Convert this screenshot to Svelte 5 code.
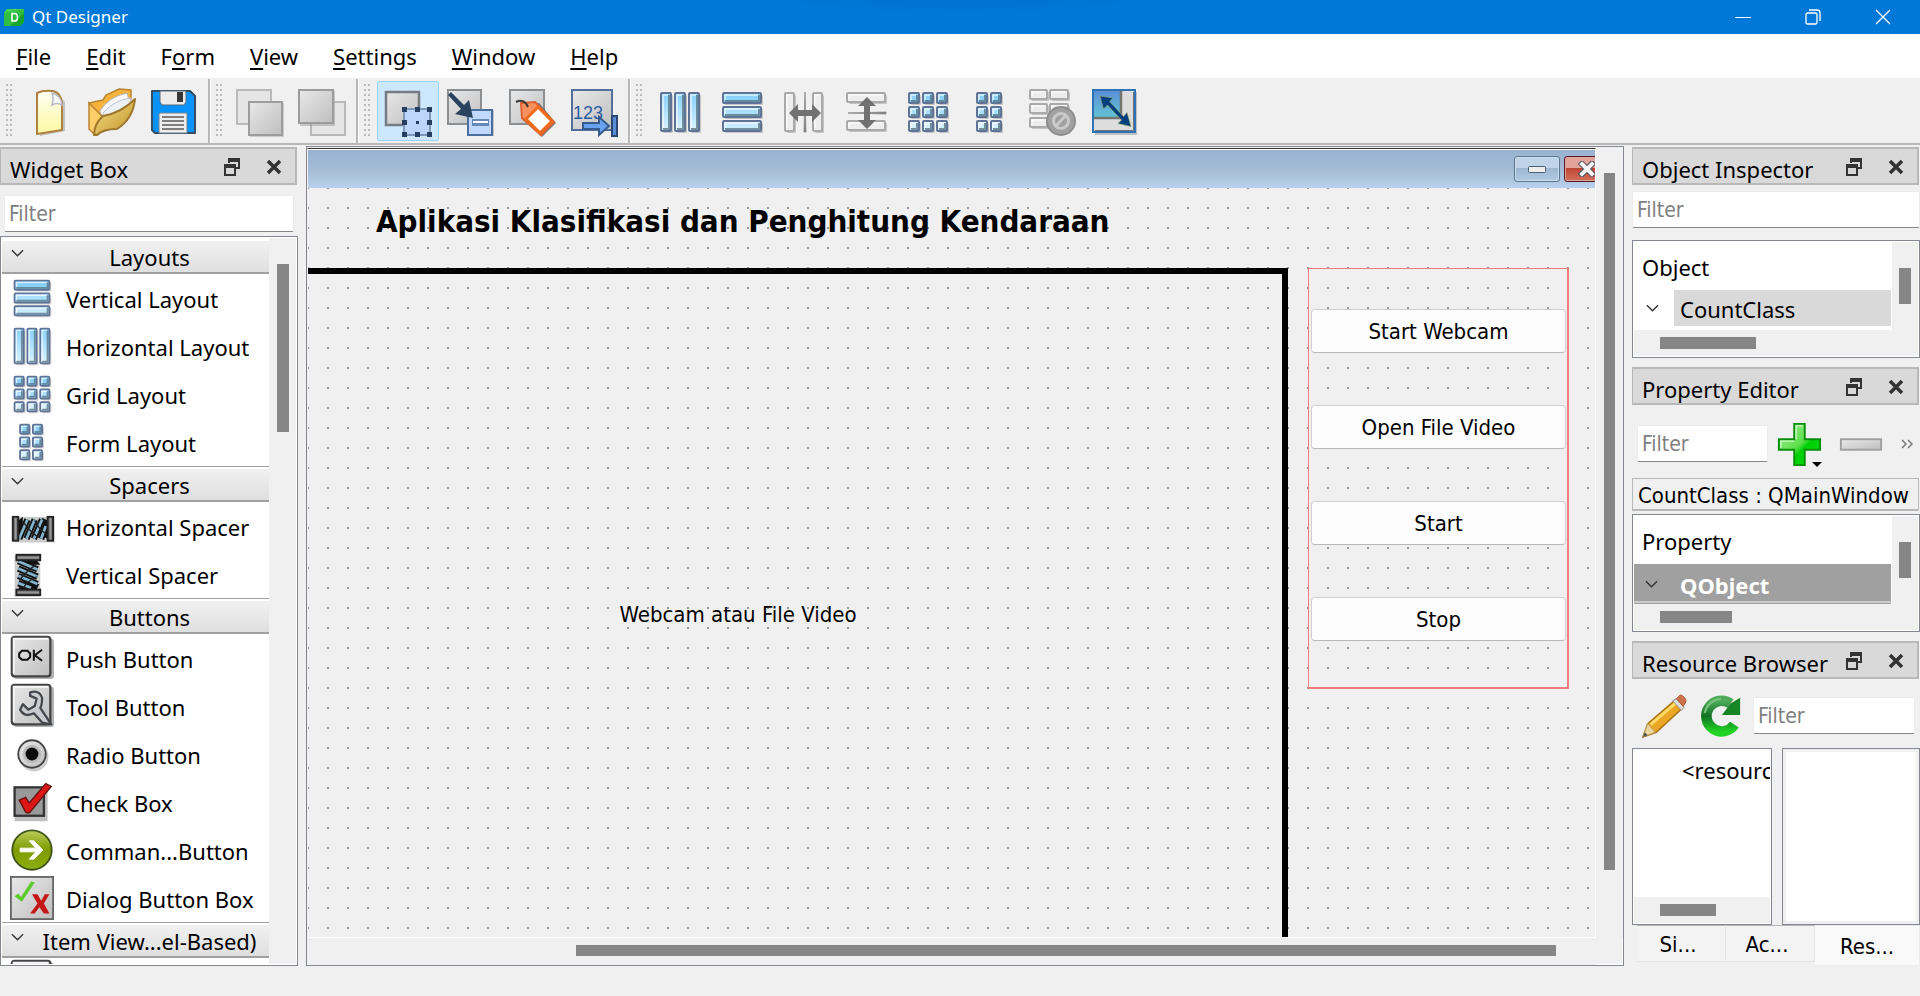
<script>
  const menus = [
    ['', 'F', 'ile'], ['', 'E', 'dit'], ['F', 'o', 'rm'], ['', 'V', 'iew'],
    ['', 'S', 'ettings'], ['', 'W', 'indow'], ['', 'H', 'elp']
  ];
  const toolbars = [
    [['new', 'New'], ['open', 'Open'], ['save', 'Save']],
    [['front', 'Bring to Front', true], ['back', 'Send to Back', true]],
    [['widgets', 'Edit Widgets'], ['signals', 'Edit Signals/Slots'], ['buddies', 'Edit Buddies'], ['taborder', 'Edit Tab Order']],
    [['hbox', 'Lay Out Horizontally'], ['vbox', 'Lay Out Vertically'], ['hsplit', 'Horizontal Splitter', true],
     ['vsplit', 'Vertical Splitter', true], ['grid', 'Lay Out in a Grid'], ['form', 'Lay Out in a Form'],
     ['break', 'Break Layout', true], ['adjust', 'Adjust Size']]
  ];
  const categories = [
    { title: 'Layouts', items: [['vbox', 'Vertical Layout'], ['hbox', 'Horizontal Layout'], ['grid', 'Grid Layout'], ['form', 'Form Layout']] },
    { title: 'Spacers', items: [['hspacer', 'Horizontal Spacer'], ['vspacer', 'Vertical Spacer']] },
    { title: 'Buttons', items: [['push', 'Push Button'], ['tool', 'Tool Button'], ['radio', 'Radio Button'], ['check', 'Check Box'], ['command', 'Comman...Button'], ['dialog', 'Dialog Button Box']] },
    { title: 'Item View...el-Based)', items: [['list', '']] }
  ];
  const formButtons = ['Start Webcam', 'Open File Video', 'Start', 'Stop'];
  const three = [0, 1, 2];
</script>

{#snippet cell(x, y, w, h, fill, stroke = '#5f7397')}
  <rect x={x + 2} y={y + 2} width={w} height={h} rx="1" fill="#000" opacity=".18" />
  <rect {x} {y} width={w} height={h} rx="1" {fill} {stroke} stroke-width="2" />
  <path d="M{x + w - 2} {y + 2}V{y + h - 2}H{x + 2}" fill="none" stroke="#54707f" stroke-width="2" opacity={stroke === '#a9a9a9' ? 0 : 0.75} />
  <path d="M{x + 2} {y + h - 3}V{y + 2}H{x + w - 3}" fill="none" stroke="#fff" stroke-width="1.5" opacity=".7" />
{/snippet}

{#snippet icon(name)}
  <svg class="icon" viewBox="0 0 48 48" aria-hidden="true">
    {#if name === 'hbox'}
      {#each three as i}{@render cell(5 + i * 14, 5, 10, 38, 'url(#blueV)')}{/each}
    {:else if name === 'vbox'}
      {#each three as i}{@render cell(5, 5 + i * 14, 38, 10, ['#8bd2fb', '#aadfff', '#c9ebff'][i])}{/each}
    {:else if name === 'grid'}
      {#each three as i}{#each three as j}{@render cell(5 + j * 14, 5 + i * 14, 10, 10, ['#8bd2fb', '#aadfff', '#d4efff'][i])}{/each}{/each}
    {:else if name === 'form'}
      {#each three as i}{#each [0, 1] as j}{@render cell(11 + j * 14, 5 + i * 14, 10, 10, ['#8bd2fb', '#aadfff', '#d4efff'][i])}{/each}{/each}
    {:else if name === 'hsplit'}
      {@render cell(5, 5, 9, 38, '#ededed', '#a9a9a9')}{@render cell(33, 5, 9, 38, '#ededed', '#a9a9a9')}
      <path d="M25 4l1 40h-2l1-40" fill="#777" stroke="#888" stroke-width=".8" />
      <path d="M9 25l9-9v6h14v-6l9 9-9 9v-6H18v6z" fill="#717171" />
    {:else if name === 'vsplit'}
      {@render cell(5, 5, 38, 9, '#ededed', '#a9a9a9')}{@render cell(5, 33, 38, 9, '#ededed', '#a9a9a9')}
      <path d="M6 25l38-1v2z" fill="#777" stroke="#888" stroke-width=".8" />
      <path d="M25 9l9 9h-6v14h6l-9 9-9-9h6V18h-6z" fill="#717171" />
    {:else if name === 'break'}
      {#each three as i}{@render cell(2, 2 + i * 14, 17, 9, '#ececec', '#a9a9a9')}{@render cell(22, 2 + i * 14, 18, 9, '#ececec', '#a9a9a9')}{/each}
      <circle cx="33" cy="33" r="14" fill="#a1a1a1" stroke="#8d8d8d" stroke-width="2" />
      <circle cx="33" cy="33" r="7.5" fill="none" stroke="#cacaca" stroke-width="3" />
      <path d="M38 27L27 39" stroke="#cacaca" stroke-width="3" />
    {:else if name === 'adjust'}
      <rect x="5" y="4" width="42" height="43" fill="#000" opacity=".2" />
      <rect x="3" y="2" width="42" height="42" fill="#ddd" stroke="#2d73b6" stroke-width="2" />
      <rect x="4" y="3" width="27" height="26" fill="url(#adj)" /><path d="M4 30H31V3" fill="none" stroke="#72766f" stroke-width="2.5" />
      <path d="M5 42.500H43.500V4" fill="none" stroke="#6f7377" />
      <path d="M10 8l13 2-3.500 3.500 14 15 3.500-4 4 14-13-3 3.500-3.500-14-15-4 4z" fill="#063f7d" stroke="#95a35a" stroke-width=".6" />
    {:else if name === 'new'}
      <path d="M13 5h17l9 9v29l-25 5z" fill="#000" opacity=".2" />
      <path d="M11 5q6-3 16-2 8 2 9 12v27l-25 4z" fill="url(#paper)" stroke="#ad8140" stroke-width="2" stroke-linejoin="round" />
      <path d="M26 5q2 6 0 12 5-3 10 0Q35 7 26 5z" fill="#f7f8fa" stroke="#b6b9c3" stroke-width="1.500" />
    {:else if name === 'open'}
      <path d="M1 15l14-3 3-5 13-6 12 1v9L14 33z" fill="#f5b33c" stroke="#b98431" stroke-width="1.500" />
      <path d="M12 23q8-14 27-18l4 14-29 16z" fill="#f8f8f8" stroke="#b5b5b5" />
      <path d="M15 25Q26 12 43 10l-3 17-26 12z" fill="#edf0f5" stroke="#bac4d1" />
      <path d="M1 15v26l6 6 7-19z" fill="#ffcd69" stroke="#b98431" stroke-width="1.500" />
      <path d="M6 47q0-11 9-19 18-3 32-17-2 20-18 30-14 0-20 6z" fill="url(#folder)" stroke="#9c762b" stroke-width="2" stroke-linejoin="round" />
    {:else if name === 'save'}
      <path d="M2 3h38l5 5v37H5l-3-3z" fill="#0793fb" stroke="#344d67" stroke-width="2" stroke-linejoin="round" />
      <path d="M10 3h26v11l-2 3H12l-2-3z" fill="#ececec" stroke="#596a78" /><rect x="27" y="4" width="6" height="10" fill="#373737" />
      <path d="M10 25h27v20H9V26z" fill="#ededed" stroke="#71848b" /><path d="M12 29h22M12 33h22M12 37h22M12 41h22" stroke="#595959" stroke-width="1.700" />
    {:else if name === 'front' || name === 'back'}
      {#if name === 'front'}
        <rect x="1" y="2" width="34" height="34" fill="#e5e5e5" stroke="#b9b9b9" stroke-width="2" />
        <rect x="14" y="15" width="34" height="34" fill="#999" opacity=".4" />
        <rect x="13" y="14" width="33" height="33" fill="url(#plate)" stroke="#9c9c9c" stroke-width="2" />
      {:else}
        <rect x="13" y="14" width="34" height="33" fill="#e5e5e5" stroke="#b9b9b9" stroke-width="2" />
        <rect x="2" y="3" width="35" height="35" fill="#999" opacity=".5" />
        <rect x="1" y="2" width="34" height="33" fill="url(#plate)" stroke="#9c9c9c" stroke-width="2" />
      {/if}
    {:else if name === 'widgets'}
      <rect x="2" y="4" width="33" height="33" fill="url(#plate)" stroke="#777c80" stroke-width="2.500" />
      <rect x="20" y="21" width="26" height="26" fill="#bdd4fb" stroke="#7f97b8" stroke-width="2" />
      <g fill="#263e61">
        {#each [18, 31, 43] as x}{#each [19, 32, 44] as y}{#if x !== 31 || y !== 32}<rect {x} {y} width="5" height="5" />{/if}{/each}{/each}
        <rect x="32" y="33" width="3" height="3" />
      </g>
    {:else if name === 'signals'}
      <rect x="2" y="2" width="33" height="34" fill="url(#plate)" stroke="#8c8f91" stroke-width="2" />
      <rect x="24" y="22" width="24" height="26" fill="#777" opacity=".35" />
      <rect x="22" y="22" width="24" height="25" fill="#c2d9ff" stroke="#4d6f9e" stroke-width="2" />
      <path d="M26 31h17v7H26z" fill="#6689ba" /><path d="M27 34h15" stroke="#fff" stroke-width="2" />
      <path d="M2 7l3-3 13 13 5-5 4 18-18-4 6-5z" fill="#29425f" />
    {:else if name === 'buddies'}
      <rect x="2" y="2" width="34" height="34" fill="url(#plate)" stroke="#8c8f91" stroke-width="2" />
      <path d="M15 16l16-1 17 20-14 14-20-18z" fill="#424c59" opacity=".7" />
      <path d="M13 15l14-1 19 20-13 13-19-17z" fill="#fa9160" stroke="#db6432" stroke-width="2" />
      <path d="M30 19l14 14-12 12-14-14z" fill="#fff" stroke="#f06a1b" stroke-width="3" />
      <path d="M8 14q8-4 12 5" fill="none" stroke="#403a37" stroke-width="2" />
    {:else if name === 'taborder'}
      <rect x="2" y="2" width="40" height="40" fill="url(#plate)" stroke="#536f9b" stroke-width="2" />
      <text x="3" y="31" class="digits">123</text>
      <path d="M13 35h16v-6l10 9-10 9v-6H13z" fill="#67a2ef" stroke="#375b8d" stroke-width="2" /><path d="M42 28h5v20h-5z" fill="#5c90d6" stroke="#294974" stroke-width="2" />
    {:else if name === 'hspacer' || name === 'vspacer'}
      <g transform={name === 'vspacer' ? 'rotate(90 24 24) translate(0 4)' : 'translate(0 3)'}>
        <rect x="4" y="11" width="45" height="28" fill="#000" opacity=".2" />
        <path d="M9 15l5-4v22l-5 3zM35 12l6 3v20l-6-3z" fill="#111" />
        <path d="M10 35l9-21M18 35l9-21M26 35l9-21M34 35l5-14" stroke="#111" stroke-width="7" />
        <path d="M10 35l9-21M18 35l9-21M26 35l9-21M34 35l5-14" stroke="#83b4cd" stroke-width="3" />
        <path d="M14 16q10 14 17 17M27 15q6 12 12 14" stroke="#222" stroke-width="1.500" fill="none" />
        <rect x="3" y="11" width="6" height="26" fill="url(#metal)" stroke="#222" stroke-width="2" />
        <rect x="41" y="11" width="6" height="26" fill="url(#metal)" stroke="#222" stroke-width="2" />
      </g>
    {:else if name === 'push' || name === 'tool' || name === 'list'}
      <rect x="4" y="3" width="44" height="44" rx="3" fill="#000" opacity=".3" />
      <rect x="2" y="1" width="42" height="43" rx="3" fill="url(#plate)" stroke="#444" stroke-width="2.500" />
      <path d="M4 41V3h38" stroke="#f8f8f8" stroke-width="2" fill="none" />
      {#if name === 'push'}
        <g fill="none" stroke="#111" stroke-width="2.200"><path d="M13 16h6l3 3v4l-3 3h-6l-3-3v-4zM26 15v12M35 15l-8 6 8 6" /></g>
      {:else if name === 'tool'}
        <path d="M22 9q10-3 13 6 0 8-2 11l12 18-10-2-9-10q-10 5-15-4l3-6 6 6 7-4 2-8-7-3z" fill="#c9cbd0" stroke="#44474d" stroke-width="2.500" stroke-linejoin="round" />
      {/if}
    {:else if name === 'radio'}
      <circle cx="26" cy="27" r="16" fill="#000" opacity=".2" />
      <circle cx="24" cy="24" r="15" fill="url(#plate)" stroke="#444" stroke-width="2" />
      <circle cx="24" cy="24" r="10" fill="#bbb" /><circle cx="24" cy="24" r="7" fill="#0b0b0b" />
    {:else if name === 'check'}
      <rect x="5" y="10" width="36" height="35" fill="#000" opacity=".25" />
      <rect x="5" y="8" width="32" height="31" fill="#999" stroke="#333" stroke-width="2.500" />
      <path d="M10 22l7-3 4 6L39 4l6 3-23 28q-3 2-5 0z" fill="#dc1515" stroke="#651211" stroke-width="1.500" />
    {:else if name === 'command'}
      <circle cx="24" cy="24" r="21.500" fill="url(#olive)" stroke="#3f531b" stroke-width="2" />
      <path d="M11 22h17l-7-8h5l10 10-10 10h-5l7-8H11z" fill="#fff" stroke="#fff" />
    {:else if name === 'dialog'}
      <rect x="1" y="1" width="46" height="46" fill="url(#plate)" stroke="#666" stroke-width="2" />
      <path d="M5 22l4-3 3 4L23 6l4 1-14 21z" fill="#5ec92b" />
      <path d="M24 20h6l4 7 4-7h5l-6 10 6 11h-6l-5-7-5 7h-5l8-11z" fill="#c41717" />
    {:else if name === 'plus'}
      <path d="M19 3h11v16h16v11H30v16H19V30H3V19h16z" fill="url(#green)" stroke="#078f08" stroke-width="2" />
      <path d="M21 19V5h7M5 28v-7h14" stroke="#c9f7c4" stroke-width="1.500" fill="none" />
    {:else if name === 'minus'}
      <rect x="3" y="19" width="42" height="11" fill="url(#plate)" stroke="#a0a0a0" stroke-width="2" />
    {:else if name === 'pencil'}
      <path d="M2 46l5-14L36 7l8 8-28 26z" fill="#eba724" stroke="#aa7518" stroke-width="1.500" />
      <path d="M10 33L38 9" stroke="#ffdb68" stroke-width="3" />
      <path d="M7 32l8 9-13 5z" fill="#ead7a0" stroke="#b9995a" /><path d="M2 46l2-5 3 3z" fill="#555" />
      <path d="M33 8l4-2 8 9-3 3z" fill="#ddd" stroke="#929292" /><path d="M37 6l4-4q6 2 6 7l-3 5z" fill="#cc7148" stroke="#a75638" />
    {:else if name === 'reload'}
      <path d="M39 33A16 16 0 1 1 35 11" fill="none" stroke="url(#reload)" stroke-width="11" />
      <path d="M45 5v18H26l9-12z" fill="#168526" />
      <path d="M8 21Q11 8 25 6" fill="none" stroke="#7ac381" stroke-width="2" />
    {/if}
  </svg>
{/snippet}

{#snippet chevron()}
  <svg class="chevron" viewBox="0 0 14 8" aria-hidden="true"><path d="M1 1l6 6 6-6" fill="none" stroke="#333" stroke-width="1.500" /></svg>
{/snippet}

{#snippet dockTitle(text)}
  <header class="dock-title">
    <h2>{text}</h2>
    <button aria-label="Float {text}"><svg width="16" height="18" viewBox="0 0 16 18"><path d="M5 5V2h10v8h-4" fill="none" stroke="#333" stroke-width="2" /><path d="M4 0h12v4H4z" fill="#333" /><rect x="1" y="8" width="10" height="9" fill="none" stroke="#333" stroke-width="2" /><path d="M0 6h12v4H0z" fill="#333" /></svg></button>
    <button aria-label="Close {text}"><svg width="16" height="16" viewBox="0 0 16 16"><path d="M2 2l12 12M14 2L2 14" stroke="#333" stroke-width="3.500" /></svg></button>
  </header>
{/snippet}

<svg class="defs" aria-hidden="true">
  <defs>
    <linearGradient id="blueV" x2="0" y2="1"><stop stop-color="#86d0ff" /><stop offset="1" stop-color="#dcf4ff" /></linearGradient>
    <linearGradient id="adj" x2="0" y2="1"><stop stop-color="#5a8fd8" /><stop offset="1" stop-color="#62c3d6" /></linearGradient>
    <linearGradient id="paper" x2="0" y2="1"><stop stop-color="#fffef6" /><stop offset="1" stop-color="#fdf9a0" /></linearGradient>
    <linearGradient id="folder" x2="1" y2="1"><stop stop-color="#f7e088" /><stop offset="1" stop-color="#c2932b" /></linearGradient>
    <linearGradient id="plate" x2="1" y2="1"><stop stop-color="#e8e8e8" /><stop offset="1" stop-color="#bfbfbf" /></linearGradient>
    <linearGradient id="metal"><stop stop-color="#444" /><stop offset=".5" stop-color="#999" /><stop offset="1" stop-color="#555" /></linearGradient>
    <linearGradient id="olive" x2="0" y2="1"><stop stop-color="#bccd5d" /><stop offset=".5" stop-color="#7e9c00" /><stop offset="1" stop-color="#8fae12" /></linearGradient>
    <linearGradient id="green" x2="1" y2="1"><stop stop-color="#a8f29c" /><stop offset=".5" stop-color="#5be04b" /><stop offset=".6" stop-color="#00cf06" /><stop offset="1" stop-color="#08e010" /></linearGradient>
    <linearGradient id="reload" x2="0" y2="1"><stop stop-color="#4fab5a" /><stop offset=".5" stop-color="#117224" /><stop offset="1" stop-color="#20d324" /></linearGradient>
  </defs>
</svg>

<div class="app">
  <header class="titlebar">
    <svg width="20" height="17" viewBox="0 0 20 17" aria-hidden="true"><path d="M3 0h17v13l-4 4H0V4z" fill="#2fbd43" /><path d="M0 4l3-4h17z" fill="#45d252" /><path d="M20 4v9l-4 4H6z" fill="#16a52b" /><path d="M8 4.500h2.500q3 0 3 3.800T10.500 12H8z" fill="none" stroke="#fff" stroke-width="1.600" /></svg>
    <h1>Qt Designer</h1>
    <button aria-label="Minimize"><svg width="16" height="16"><path d="M0 8.500h16" stroke="#fff" /></svg></button>
    <button aria-label="Restore"><svg width="16" height="16" fill="none" stroke="#fff" stroke-width="1.300"><rect x="1" y="4" width="11" height="11" rx="1.500" /><path d="M4 1h8q3 0 3 3v8" /></svg></button>
    <button aria-label="Close"><svg width="16" height="16"><path d="M1 1l14 14M15 1L1 15" stroke="#fff" stroke-width="1.300" /></svg></button>
  </header>

  <nav class="menubar">
    {#each menus as [a, key, b]}<button>{a}<u>{key}</u>{b}</button>{/each}
  </nav>

  <div class="toolbars">
    {#each toolbars as bar}
      <div class="toolbar" role="toolbar">
        <span class="grip"></span>
        {#each bar as [name, label, off]}
          <button aria-label={label} disabled={off} class:active={name === 'widgets'}>{@render icon(name)}</button>
        {/each}
      </div>
    {/each}
  </div>

  <main>
    <aside class="widget-box">
      {@render dockTitle('Widget Box')}
      <input class="filter" placeholder="Filter" aria-label="Filter widgets" />
      <div class="palette">
        <div class="categories">
          {#each categories as c}
            <section>
              <button class="category">{@render chevron()}<span>{c.title}</span></button>
              <ul>{#each c.items as [name, label]}<li>{@render icon(name)}<span>{label}</span></li>{/each}</ul>
            </section>
          {/each}
        </div>
        <div class="vbar"><div class="thumb"></div></div>
      </div>
    </aside>

    <section class="mdi">
      <div class="subwindow">
        <div class="sub-title">
          <button aria-label="Minimize form" class="sub-min"><svg width="18" height="7"><rect x=".5" y=".5" width="17" height="6" rx="1" fill="#eee" stroke="#4b6075" /></svg></button>
          <button aria-label="Close form" class="sub-close"><svg width="18" height="16" viewBox="0 0 18 16"><path d="M4 3l10 10M14 3L4 13" stroke="#4a4c5e" stroke-width="6" stroke-linecap="square" /><path d="M4 3l10 10M14 3L4 13" stroke="#f4f4f4" stroke-width="4" stroke-linecap="square" /></svg></button>
        </div>
        <div class="canvas">
          <h2>Aplikasi Klasifikasi dan Penghitung Kendaraan</h2>
          <div class="video">Webcam atau File Video</div>
          <div class="layout-box">
            {#each formButtons as b}<button>{b}</button>{/each}
          </div>
        </div>
      </div>
      <div class="vbar"><div class="thumb"></div></div>
      <div class="hbar"><div class="thumb"></div></div>
    </section>

    <aside class="right">
      <section class="inspector">
        {@render dockTitle('Object Inspector')}
        <input class="filter" placeholder="Filter" aria-label="Filter objects" />
        <div class="tree">
          <div class="rows">
            <div class="head">Object</div>
            <div class="row object">{@render chevron()}<span>CountClass</span></div>
          </div>
          <div class="vbar"><div class="thumb"></div></div>
          <div class="hbar"><div class="thumb"></div></div>
        </div>
      </section>

      <section class="properties">
        {@render dockTitle('Property Editor')}
        <div class="prop-tools">
          <input class="filter" placeholder="Filter" aria-label="Filter properties" />
          <button aria-label="Add dynamic property" class="add">{@render icon('plus')}<i></i></button>
          <button aria-label="Remove dynamic property" disabled>{@render icon('minus')}</button>
          <button aria-label="More" class="more"><svg width="12" height="10" fill="none" stroke="#777" stroke-width="1.500"><path d="M1 1l4 4-4 4M7 1l4 4-4 4" /></svg></button>
        </div>
        <div class="class-name">CountClass : QMainWindow</div>
        <div class="tree">
          <div class="rows">
            <div class="head">Property</div>
            <div class="row group">{@render chevron()}<span>QObject</span></div>
          </div>
          <div class="vbar"><div class="thumb"></div></div>
          <div class="hbar"><div class="thumb"></div></div>
        </div>
      </section>

      <section class="resources">
        {@render dockTitle('Resource Browser')}
        <div class="res-tools">
          <button aria-label="Edit Resources">{@render icon('pencil')}</button>
          <button aria-label="Reload">{@render icon('reload')}</button>
          <input class="filter" placeholder="Filter" aria-label="Filter resources" />
        </div>
        <div class="res-panes">
          <div class="pane"><p>&lt;resource root&gt;</p><div class="hbar"><div class="thumb"></div></div></div>
          <div class="pane files"></div>
        </div>
        <div class="tabs" role="tablist">
          <button role="tab" aria-selected="false">Si...</button>
          <button role="tab" aria-selected="false">Ac...</button>
          <button role="tab" aria-selected="true" class="current">Res...</button>
        </div>
      </section>
    </aside>
  </main>
</div>

<style>
  :global(body) { margin: 0; background: #f0f0f0; }
  .app { display: flex; flex-direction: column; height: 100vh; overflow: hidden; box-sizing: border-box; padding-bottom: 30px; background: #f0f0f0; color: #000; font: 22px/30px "Noto Sans", sans-serif; }
  .app *, .app *::before { box-sizing: border-box; }
  .defs { position: absolute; width: 0; height: 0; }
  button { font: inherit; color: inherit; background: none; border: 0; padding: 0; margin: 0; }
  h1, h2, p, ul { margin: 0; padding: 0; font: inherit; }
  svg { display: block; flex: none; }
  .icon { width: 48px; height: 48px; overflow: visible; }
  .prop-tools .icon, .res-tools .icon { width: 46px; height: 46px; }
  .digits { font: 18px "Liberation Sans", sans-serif; fill: #2a5ca5; }

  .titlebar { flex: none; display: flex; align-items: center; height: 34px; padding: 0 2px 0 4px; background: radial-gradient(ellipse 180px 12px at 50% 0, #0074d0 50%, #0078d7) #0078d7; color: #fff; font-size: 17px; }
  .titlebar h1 { flex: 1; margin-left: 8px; }
  .titlebar button { width: 70px; height: 34px; display: grid; place-items: center; }
  .menubar { flex: none; display: flex; gap: 2px; height: 45px; background: #fff; border-bottom: 1px solid #efefef; }
  .menubar button { padding: 0 17px 0 16px; }
  .menubar u { text-decoration-thickness: 2px; text-underline-offset: 3px; text-decoration-skip-ink: none; }
  .toolbars { flex: none; display: flex; height: 66px; border-bottom: 2px solid #b8b8b8; }
  .toolbar { display: flex; align-items: center; padding-right: 3px; border-right: 2px solid #b8b8b8; box-shadow: 1px 0 #fff; }
  .toolbar:last-child { border-right: 0; box-shadow: none; }
  .grip { width: 6px; height: 54px; margin: 0 7px 0 6px; background: conic-gradient(from 270deg at 2px 2px, #bbb 90deg, transparent 0) 0 0 / 4px 5px; }
  .toolbar button { width: 62px; height: 60px; padding-top: 2px; display: grid; place-items: center; border: 1px solid transparent; }
  .toolbar .active { background: #cce8ff; border-color: #99d1ff; border-radius: 2px; }

  main { flex: 1; min-height: 0; display: grid; grid-template-columns: 298px minmax(0, 1fr) 288px; gap: 8px; }
  .widget-box, .right { display: flex; flex-direction: column; min-height: 0; padding-top: 2px; }
  .dock-title { flex: none; display: flex; align-items: center; height: 38px; padding: 2px 13px 0 9px; margin-right: 1px; background: #d9d9d9; border: 2px solid #b8b8b8; border-left-width: 1px; }
  .dock-title h2 { flex: 1; padding-top: 4px; white-space: nowrap; }
  .dock-title button { margin-left: 26px; }
  .dock-title button:first-of-type { margin-left: 0; }
  .filter { display: block; width: 100%; min-width: 0; height: 37px; padding: 0 4px; font: 21px "DejaVu Sans Condensed", "Noto Sans", sans-serif; color: #000; background: #fff; border: 1px solid #ececec; border-bottom: 1px solid #868686; border-radius: 2px; }
  .filter::placeholder { color: #808080; opacity: 1; }
  .widget-box .filter { width: auto; margin: 10px 4px 4px; }
  .palette { flex: 1; min-height: 0; display: flex; border: 1px solid #828790; background: #fff; padding: 1px; }
  .categories { flex: 1; overflow: hidden; }
  .category { position: relative; display: flex; align-items: center; width: 100%; height: 36px; padding-left: 9px; background: linear-gradient(#f2f2f2, #dfdfdf); border-top: 1px solid #a0a0a0; border-bottom: 2px solid #a0a0a0; box-shadow: inset 0 2px #fff; }
  section:first-child > .category { border-top-color: #fff; }
  .category .chevron { margin-bottom: 6px; }
  .category span { flex: 1; padding: 2px 0 0 6px; text-align: center; white-space: nowrap; }
  .chevron { width: 13px; height: 8px; }
  ul { list-style: none; }
  li { display: flex; align-items: center; height: 48px; padding-left: 8px; }
  li .icon { width: 44px; height: 44px; }
  li span { margin-left: 12px; padding-top: 2px; white-space: nowrap; }
  .vbar { width: 26px; background: #f0f0f0; padding: 26px 7px; }
  .hbar { height: 26px; background: #f0f0f0; padding: 7px 26px; }
  .thumb { width: 100%; height: 100%; background: #868686; }
  .palette .vbar { padding-left: 8px; width: 27px; }
  .palette .vbar .thumb { height: 168px; }

  .mdi { display: grid; grid-template: minmax(0, 1fr) 27px / minmax(0, 1fr) 27px; margin-top: 1px; border: 1px solid #828790; box-shadow: inset -1px -1px #fff; }
  .subwindow { display: flex; flex-direction: column; min-height: 0; border-top: 1px solid #333; border-left: 1px solid #f0f0f0; border-right: 1px solid #fff; border-bottom: 1px solid #fff; overflow: hidden; margin-top: 1px; }
  .sub-title { flex: none; display: flex; justify-content: flex-end; align-items: center; height: 39px; border-top: 1px solid #fff; background: linear-gradient(#98b3d1, #a4bad5 50%, #b9d1ea); }
  .sub-title button { width: 46px; height: 26px; display: grid; place-items: center; border-radius: 3px; }
  .sub-min { border: 1px solid #5c7590; background: linear-gradient(#bfd3e9 45%, #9cb5d2 45%, #b3cae3); box-shadow: inset 0 0 0 1px #cddded; }
  .sub-close { border: 1px solid #5d1821; background: linear-gradient(#e2a49a 45%, #bc4430 45%, #d4705d); box-shadow: inset 0 0 0 1px #dba69e; margin: 0 -15px 0 4px; }
  .canvas { flex: 1; min-height: 0; display: grid; grid-template: 80px minmax(0, 1fr) / minmax(0, 1fr) 261px; column-gap: 20px; padding-right: 26px; background: conic-gradient(from 270deg at 2px 2px, #999 90deg, transparent 0) -1px -1px / 20px 20px; font: 22px/28px "DejaVu Sans Condensed", "Noto Sans", sans-serif; }
  .canvas h2 { grid-column: 1 / 3; padding: 12px 0 0 68px; font-size: 31px; line-height: 42px; font-weight: 700; white-space: nowrap; }
  .video { display: grid; place-content: center; padding: 18px 114px 0 0; border: solid #000; border-width: 6px 6px 0 0; white-space: nowrap; }
  .layout-box { align-self: start; display: flex; flex-direction: column; gap: 52px; padding: 40px 1px 46px 2px; border: solid #f37b7e; border-width: 1px 2px 2px 1px; }
  .layout-box button { height: 44px; padding-top: 2px; background: #fdfdfd; border: 1px solid #d0d0d0; border-bottom-color: #b8b8b8; border-radius: 4px; }
  .mdi > .vbar { grid-area: 1 / 2; width: auto; padding: 26px 8px 68px; }
  .mdi > .hbar { grid-area: 2 / 1; height: auto; padding: 7px 40px 9px 269px; }

  .right section { display: flex; flex-direction: column; min-height: 0; flex: none; }
  .inspector .filter { margin: 6px 0 12px; }
  .tree { display: grid; grid-template: 88px 26px / minmax(0, 1fr) 26px; height: 118px; border: 1px solid #828790; background: #fff; padding: 1px; }
  .tree .hbar { grid-column: 1 / 3; }
  .tree .vbar .thumb { height: 36px; }
  .rows { overflow: hidden; }
  .head { height: 48px; padding: 10px 0 0 8px; }
  .row { display: flex; align-items: center; padding-left: 12px; }
  .row span { flex: 1; }
  .object span { height: 36px; line-height: 38px; margin: 0 1px 0 15px; padding-left: 6px; background: #d9d9d9; }
  .group { height: 40px; margin-right: 1px; padding-left: 11px; background: #a0a0a0; border-bottom: 1px solid #a0a0a0; box-shadow: inset 0 -2px #ccc; color: #fff; font-weight: 700; }
  .group span { padding: 2px 0 0 22px; }
  .inspector .hbar .thumb { width: 96px; }
  .properties .hbar .thumb { width: 72px; }
  .properties, .resources { margin-top: 9px; }
  .prop-tools { display: flex; align-items: center; height: 73px; padding: 4px 7px 0 5px; }
  .prop-tools .filter { flex: 1; }
  .prop-tools button { margin-left: 16px; }
  .prop-tools .add { position: relative; margin-left: 8px; }
  .add i { position: absolute; right: 0; bottom: 0; border: 5px solid transparent; border-top-color: #000; border-bottom: 0; }
  .prop-tools .more { margin-left: 17px; }
  .class-name { height: 33px; margin: 0 1px 3px 0; padding: 2px 0 0 5px; border: 1px solid #b8b8b8; border-bottom-width: 2px; font: 22px/30px "DejaVu Sans Condensed", "Noto Sans", sans-serif; white-space: nowrap; }
  .res-tools { display: flex; align-items: center; height: 69px; gap: 10px; padding: 4px 5px 0 9px; }
  .res-tools .filter { flex: 1; }
  .right .resources { flex: 1; }
  .res-panes { display: grid; grid-template-columns: 140px minmax(0, 1fr); gap: 10px; flex: 1; min-height: 0; max-height: 177px; }
  .pane { display: flex; flex-direction: column; justify-content: space-between; border: 1px solid #828790; background: #fff; padding: 1px; overflow: hidden; }
  .pane p { padding: 5px 0 0 48px; white-space: nowrap; overflow: hidden; }
  .pane .thumb { width: 56px; }
  .files { box-shadow: inset 0 0 0 3px #f0f0f0; }
  .tabs { display: flex; align-items: flex-start; height: 41px; padding-left: 5px; font: 22px/28px "DejaVu Sans Condensed", "Noto Sans", sans-serif; }
  .tabs button { width: 89px; height: 37px; padding: 2px 6px 0 0; background: #f3f3f3; border: 1px solid #e5e5e5; border-left-width: 0; border-top: 1px solid #b8b8b8; }
  .tabs .current { flex: 1; height: 41px; padding: 2px 0 0; background: #f9f9f9; border-color: #ececec; }
</style>
